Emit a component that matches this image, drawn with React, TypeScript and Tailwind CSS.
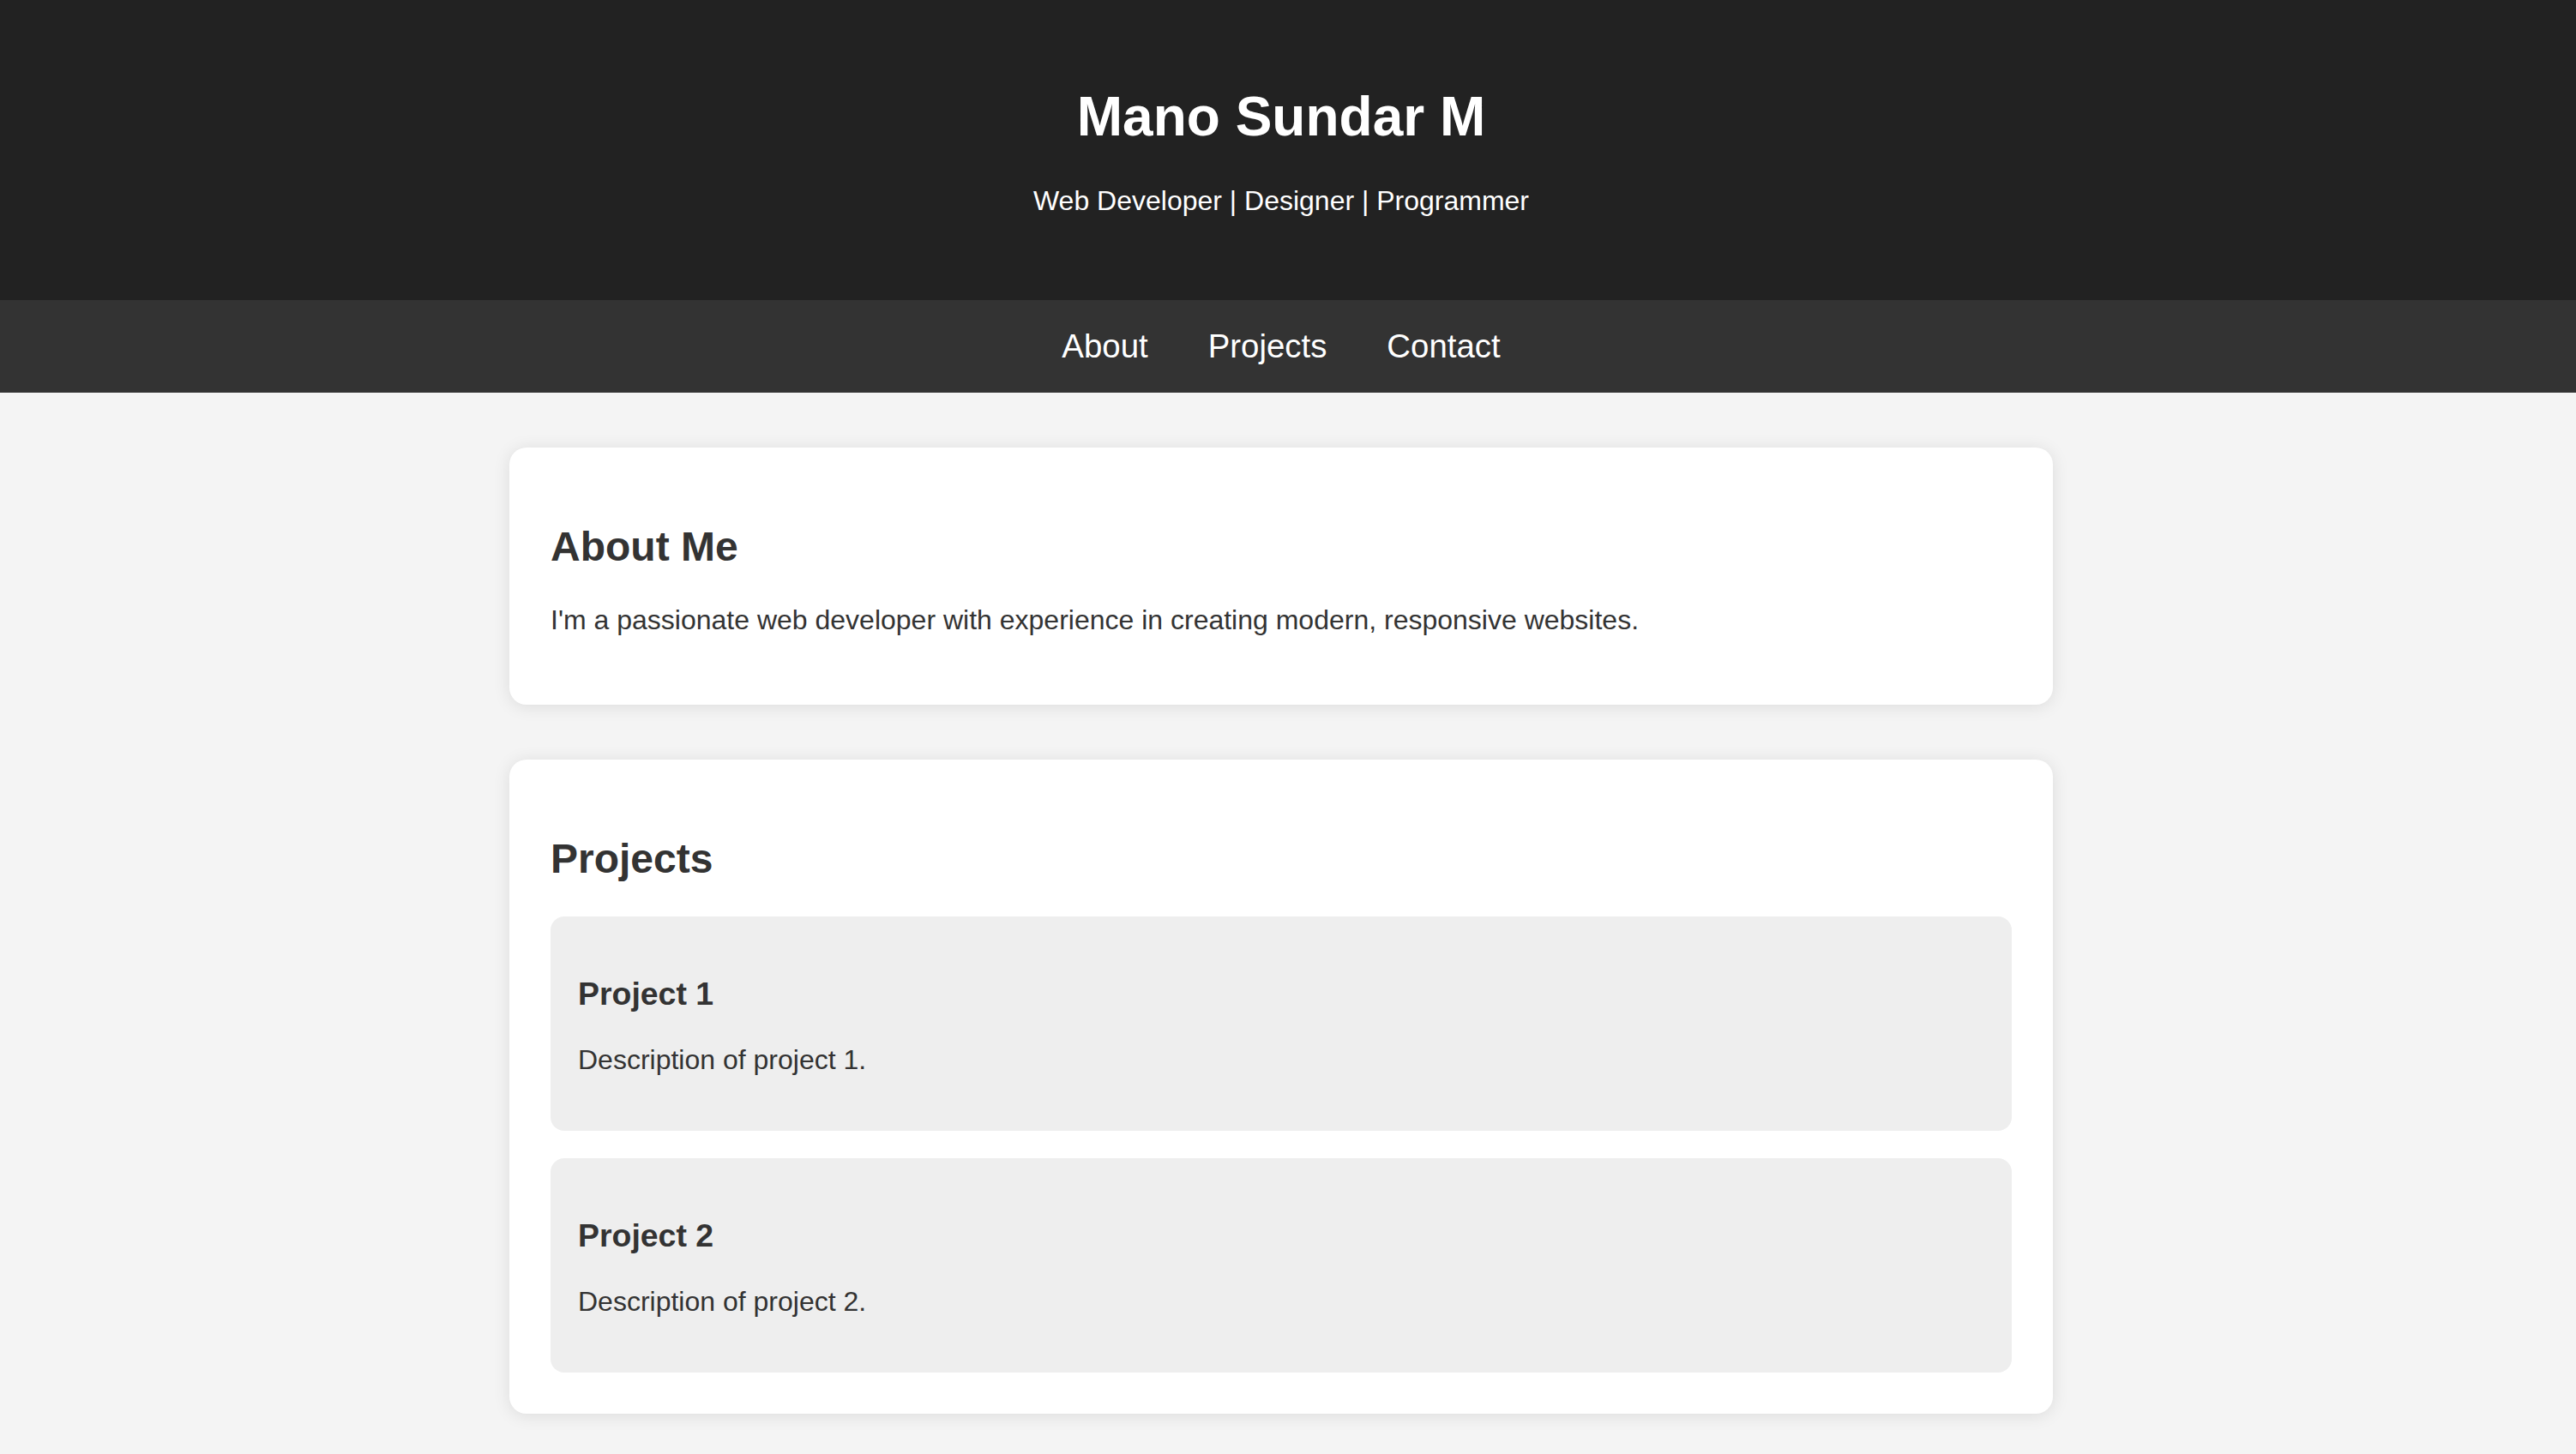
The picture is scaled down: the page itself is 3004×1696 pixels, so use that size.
import React from "react";

const projects = [
  { title: "Project 1", text: "Description of project 1." },
  { title: "Project 2", text: "Description of project 2." },
];

export default function App() {
  return (
    <div className="min-h-screen bg-[#f4f4f4] font-['Liberation_Sans',Arial,sans-serif] text-[#333]">
      {/* Header */}
      <header className="bg-[#222] pr-4 pt-[100px] pb-[97px] text-center text-white">
        <h1 className="text-[64px] font-bold leading-[73px]">Mano Sundar M</h1>
        <p className="mt-[43px] text-[32px] leading-[37px]">Web Developer | Designer | Programmer</p>
      </header>

      {/* Nav */}
      <nav className="bg-[#333] pr-4 py-[32px]">
        <div className="flex justify-center gap-[70px] text-[38.4px] leading-[44px] text-white">
          <a href="#about">About</a>
          <a href="#projects">Projects</a>
          <a href="#contact">Contact</a>
        </div>
      </nav>

      {/* Main */}
      <main className="pr-4 pt-[64px] pb-[64px]">
        <div className="mx-auto flex max-w-[1800px] flex-col gap-[64px]">
          <section id="about" className="rounded-[20px] bg-white p-[48px] shadow-[0_2px_20px_rgba(0,0,0,0.1)]">
            <h2 className="mt-[40px] text-[48px] font-bold leading-[55px]">About Me</h2>
            <p className="mt-[40px] mb-[32px] text-[32px] leading-[37px]">
              I'm a passionate web developer with experience in creating modern, responsive websites.
            </p>
          </section>

          <section id="projects" className="rounded-[20px] bg-white p-[48px] shadow-[0_2px_20px_rgba(0,0,0,0.1)]">
            <h2 className="mt-[40px] mb-[40px] text-[48px] font-bold leading-[55px]">Projects</h2>
            <div className="flex flex-col gap-[32px]">
              {projects.map((p) => (
                <div key={p.title} className="rounded-[16px] bg-[#eee] p-[32px]">
                  <h3 className="mt-[37px] text-[37.44px] font-bold leading-[43px]">{p.title}</h3>
                  <p className="mt-[37px] mb-[32px] text-[32px] leading-[37px]">{p.text}</p>
                </div>
              ))}
            </div>
          </section>
        </div>
      </main>
    </div>
  );
}
